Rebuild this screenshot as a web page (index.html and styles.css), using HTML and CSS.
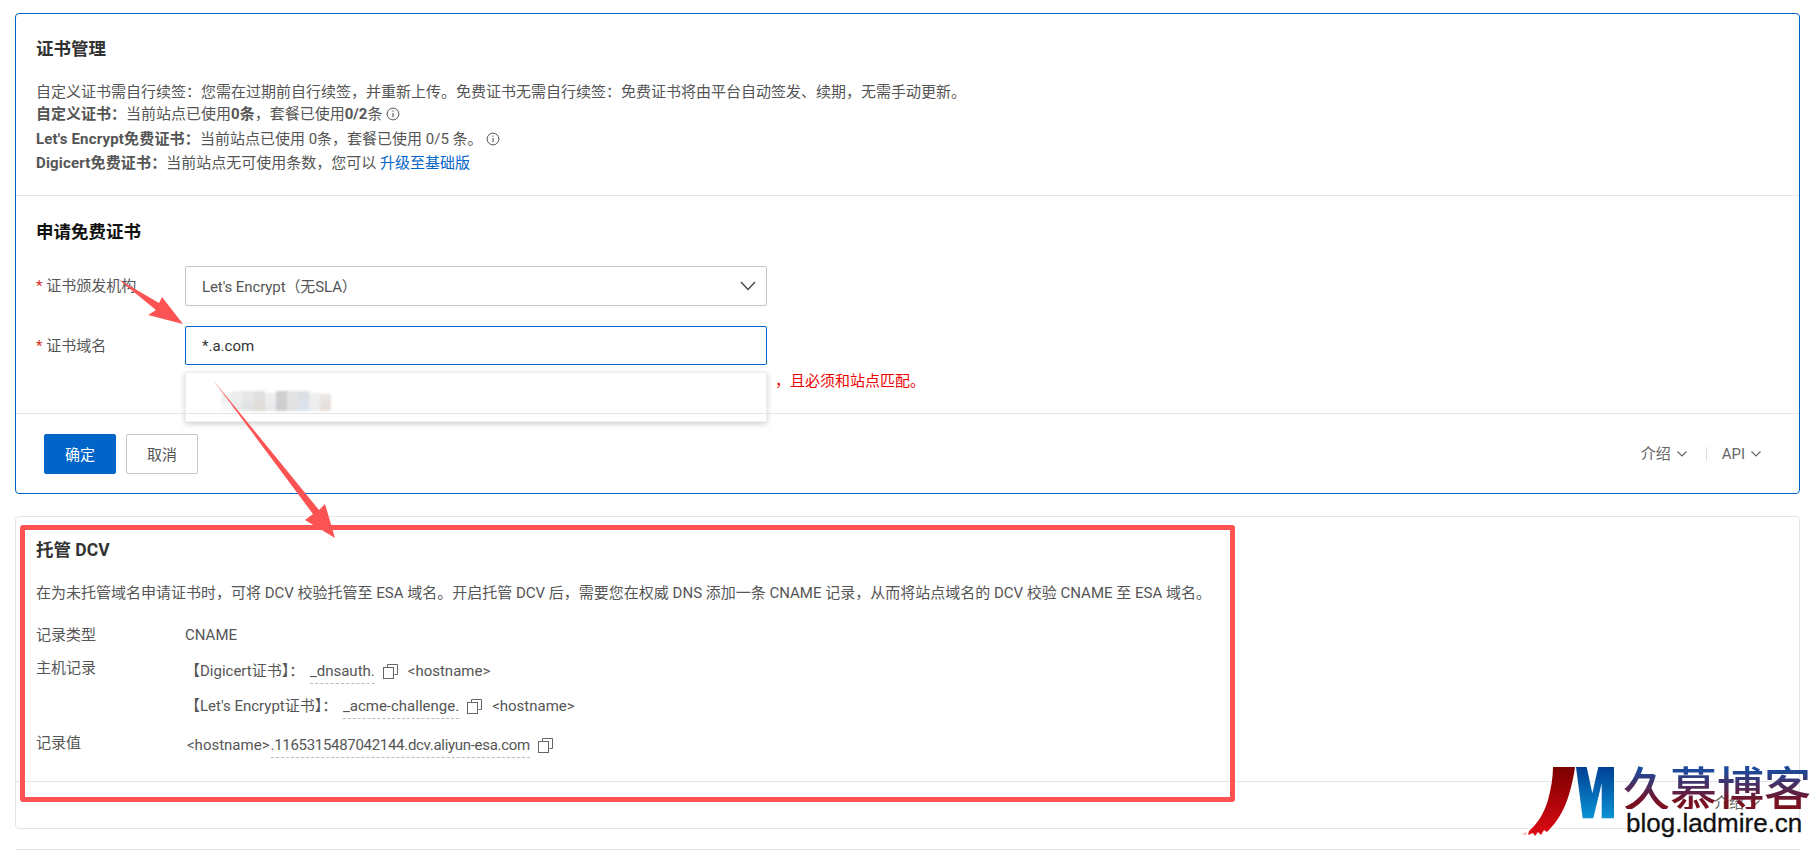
FILE: index.html
```html
<!DOCTYPE html>
<html lang="zh-CN">
<head>
<meta charset="utf-8">
<title>证书管理</title>
<link rel="stylesheet" href="styles.css">
</head>
<body>
<svg width="0" height="0" class="defs">
  <symbol id="copy" viewBox="0 0 15 15"><path d="M4.5 3.5V.5h10v10h-3" fill="none" stroke="#666" stroke-width="1"/><rect x=".5" y="3.5" width="10" height="11" fill="none" stroke="#666" stroke-width="1"/></symbol>
  <symbol id="info" viewBox="0 0 14 14"><circle cx="7" cy="7" r="5.9" fill="none" stroke="#555" stroke-width="1"/><path d="M7 6v4.2M7 3.6v1.2" stroke="#555" stroke-width="1.1"/></symbol>
  <symbol id="chev" viewBox="0 0 10 6"><path d="M.5.5 5 5 9.500.5" fill="none" stroke="#666" stroke-width="1.2"/></symbol>
</svg>
<main class="page">
  <section class="card card-active">
    <div class="section section-intro">
      <h2 class="title">证书管理</h2>
      <p class="line line-first">自定义证书需自行续签：您需在过期前自行续签，并重新上传。免费证书无需自行续签：免费证书将由平台自动签发、续期，无需手动更新。</p>
      <p class="line"><b>自定义证书：</b>当前站点已使用<b>0条</b>，套餐已使用<b>0/2</b>条 <svg class="ico-info"><use href="#info"/></svg></p>
      <p class="line line-third"><b class="wide">Let's Encrypt免费证书：</b>当前站点已使用 0条，套餐已使用 0/5 条。 <svg class="ico-info"><use href="#info"/></svg></p>
      <p class="line line-gap"><b class="wide">Digicert免费证书：</b>当前站点无可使用条数，您可以 <a class="link">升级至基础版</a></p>
    </div>
    <div class="section section-form">
      <h2 class="title title-dark">申请免费证书</h2>
      <div class="field">
        <label class="label"><span class="req">*</span> 证书颁发机构</label>
        <div class="select"><span class="select-text">Let's Encrypt（无SLA）</span><svg class="ico-select" viewBox="0 0 16 10"><path d="M1 1l7 7.500L15 1" fill="none" stroke="#444" stroke-width="1.300"/></svg></div>
      </div>
      <div class="field field-domain">
        <label class="label"><span class="req">*</span> 证书域名</label>
        <div class="input">*.a.com</div>
      </div>
      <p class="help">，且必须和站点匹配。</p>
      <div class="dropdown">
        <svg class="blur" width="120" height="36" viewBox="0 0 120 36">
          <g class="blur-g">
            <rect x="0" y="4" width="11" height="9" fill="#f0f0f0"/><rect x="11" y="2" width="11" height="11" fill="#ededed"/><rect x="22" y="2" width="11" height="11" fill="#e6e6e6"/><rect x="33" y="2" width="11" height="11" fill="#dfdfdf"/><rect x="44" y="4" width="11" height="9" fill="#ededed"/><rect x="55" y="2" width="11" height="11" fill="#cfcfd2"/><rect x="66" y="2" width="11" height="11" fill="#e3e3e3"/><rect x="77" y="2" width="11" height="11" fill="#dcdfe3"/><rect x="88" y="4" width="11" height="9" fill="#eeeeee"/><rect x="99" y="5" width="11" height="8" fill="#e8e5e3"/>
            <rect x="0" y="13" width="11" height="9" fill="#f8f8f8"/><rect x="11" y="13" width="11" height="9" fill="#eaeaea"/><rect x="22" y="13" width="11" height="9" fill="#e0e3e5"/><rect x="33" y="13" width="11" height="9" fill="#e0dcd8"/><rect x="44" y="13" width="11" height="9" fill="#e8eaec"/><rect x="55" y="13" width="11" height="9" fill="#cdcdd0"/><rect x="66" y="13" width="11" height="9" fill="#e3e1df"/><rect x="77" y="13" width="11" height="9" fill="#dbe3ec"/><rect x="88" y="13" width="11" height="9" fill="#eeeeee"/><rect x="99" y="13" width="11" height="9" fill="#e6e0dc"/>
          </g>
        </svg>
      </div>
    </div>
    <div class="footer">
      <div class="actions">
        <button class="btn btn-primary">确定</button>
        <button class="btn">取消</button>
      </div>
      <div class="doc-links">
        <span class="doc">介绍 <svg class="ico-chev"><use href="#chev"/></svg></span>
        <i class="sep"></i>
        <span class="doc">API <svg class="ico-chev"><use href="#chev"/></svg></span>
      </div>
    </div>
  </section>

  <section class="card card-plain">
    <div class="section-dcv">
      <h2 class="title title-dcv">托管 DCV</h2>
      <p class="desc">在为未托管域名申请证书时，可将 DCV 校验托管至 ESA 域名。开启托管 DCV 后，需要您在权威 DNS 添加一条 CNAME 记录，从而将站点域名的 DCV 校验 CNAME 至 ESA 域名。</p>
      <div class="kv kv-type"><span class="k">记录类型</span><span class="v">CNAME</span></div>
      <div class="kv kv-host">
        <span class="k">主机记录</span>
        <div class="v-col">
          <div class="v v-row">【Digicert证书】： <span class="dash dash-host">_dnsauth.</span><svg class="ico-copy"><use href="#copy"/></svg><span class="host">&lt;hostname&gt;</span></div>
          <div class="v v-row v-row-2">【Let's Encrypt证书】： <span class="dash dash-host">_acme-challenge.</span><svg class="ico-copy"><use href="#copy"/></svg><span class="host">&lt;hostname&gt;</span></div>
        </div>
      </div>
      <div class="kv kv-val">
        <span class="k">记录值</span>
        <div class="v v-row"><span class="host-lead">&lt;hostname&gt;</span><span class="dash dash-val">.1165315487042144.dcv.aliyun-esa.com</span><svg class="ico-copy"><use href="#copy"/></svg></div>
      </div>
    </div>
    <div class="footer-dcv"><span class="doc">介绍 <svg class="ico-chev"><use href="#chev"/></svg></span></div>
  </section>
  <div class="next-card"></div>
</main>

<div class="redbox"></div>
<svg class="arrows" width="1819" height="850" viewBox="0 0 1819 850">
  <polygon fill="#fb5353" points="118,279 159,303 162,297 183,324 148,315 156,310"/>
  <polygon fill="#fb5353" points="213,380 319,510 325,504 335,538 305,520 313,514"/>
</svg>
<div class="watermark">
  <svg class="wm-logo" width="96" height="72" viewBox="0 0 96 72">
    <defs>
      <linearGradient id="gj" x1="0" y1="0" x2="0" y2="1"><stop offset="0" stop-color="#7a0000"/><stop offset="1" stop-color="#e00a14"/></linearGradient>
      <linearGradient id="gm" x1="0" y1="0" x2="0" y2="1"><stop offset="0" stop-color="#003f94"/><stop offset="1" stop-color="#0a92d4"/></linearGradient>
    </defs>
    <path fill="url(#gj)" d="M33 0H55C53 14 49 31 43 43 38 53 32 60 27 65L24 63 21 68 18 65 15 69 13 66 8 68 9 64C17 57 24 47 28 33 31 22 33 10 33 0Z"/>
    <path fill="#f3b0b0" d="M2 67 7 65 6 68Z"/>
    <path fill="url(#gm)" d="M56 0H66.700L72.300 26.300 78.300 0H94V51.300H81.700V16.300L73.300 51.300H62.700Z"/>
  </svg>
  <div class="wm-text">
    <div class="wm-cn">久慕博客</div>
    <div class="wm-en">blog.ladmire.cn</div>
  </div>
</div>
</body>
</html>
```
FILE: styles.css
```css
* { box-sizing: border-box; }
html, body { margin: 0; height: 850px; overflow: hidden; background: #fff; }
body {
  position: relative;
  font-family: Roboto, "Noto Sans CJK SC", sans-serif;
  font-size: 15px;
  color: #555;
}
.defs { position: absolute; }
.page { padding: 13px 19px 0 15px; }
.card { background: #fff; border-radius: 4px; }
.card-active { border: 1px solid #0064c8; }
.card-plain { border: 1px solid #e5e5e5; margin-top: 22px; height: 313px; display: flex; flex-direction: column; }
.next-card { border-top: 1px solid #e5e5e5; margin-top: 20px; }

.section-intro { padding: 23px 21px 21px 20px; border-bottom: 1px solid #e5e5e5; height: 182px; }
.title { margin: 0; font-size: 17.5px; line-height: 24px; font-weight: 700; color: #333; }
.title-dark { color: #111; }
.line { margin: 0; line-height: 22px; white-space: nowrap; }
.line-first { margin-top: 20px; }
.line-third { margin-top: 3px; }
.line-gap { margin-top: 2px; }
.line b { font-weight: 700; }
.line .wide { letter-spacing: .17px; }
.link { color: #0064c8; }
.ico-info { width: 14px; height: 14px; vertical-align: -2px; }

.section-form { position: relative; padding: 24px 20px 21px; height: 217px; }
.field { display: flex; align-items: center; margin-top: 22px; }
.field-domain { margin-top: 20px; }
.label { width: 149px; line-height: 20px; color: #555; }
.req { color: #d93026; }
.select, .input {
  width: 582px; height: 40px; border-radius: 2px; padding-left: 16px;
  display: flex; align-items: center; background: #fff; color: #555;
}
.select { border: 1px solid #c4c6cc; position: relative; justify-content: space-between; padding-right: 10px; }
.select-text { padding-bottom: 2px; letter-spacing: -.1px; }
.ico-select { width: 16px; height: 10px; }
.input { border: 1px solid #0064c8; height: 39px; color: #333; }
.help { margin: 6px 0 0; padding-left: 739px; color: #e00; line-height: 20px; }
.dropdown {
  position: absolute; left: 169px; top: 176px; width: 582px; height: 50px;
  background: #fff; border: 1px solid #eee; box-shadow: 0 2px 6px rgba(0,0,0,.2); z-index: 2;
  padding: 16px 0 0 35px;
}
.blur { display: block; }
.blur-g { filter: blur(1px); }

.footer { display: flex; justify-content: space-between; align-items: center; border-top: 1px solid #e5e5e5; padding: 20px 38px 19px 28px; position: relative; z-index: 3; background: transparent; }
.actions { display: flex; gap: 10px; }
.btn {
  width: 72px; height: 40px; border: 1px solid #c4c6cc; background: #fff; border-radius: 2px;
  font: inherit; color: #555; padding: 0 0 2px;
}
.btn-primary { background: #0064c8; border-color: #0064c8; color: #fff; }
.doc-links { display: flex; align-items: center; gap: 15px; }
.doc { display: inline-flex; align-items: center; gap: 6px; color: #666; line-height: 20px; }
.ico-chev { width: 10px; height: 6px; }
.sep { width: 1px; height: 14px; background: #ddd; margin-left: 4px; }

.section-dcv { padding: 21px 20px 0; height: 265px; border-bottom: 1px solid #e5e5e5; }
.title-dcv { color: #333; }
.desc { margin: 20px 0 0; line-height: 22px; white-space: nowrap; }
.kv { display: flex; line-height: 20px; }
.kv-type { margin-top: 21px; }
.kv-host { margin-top: 13px; }
.kv-val { margin-top: 17px; }
.k { width: 149px; flex: none; }
.v-col { display: flex; flex-direction: column; margin-top: 3px; }
.v { display: flex; align-items: center; white-space: pre; }
.v-row-2 { margin-top: 15px; }
.kv-val .v-row { margin-top: 2px; padding-left: 2px; }
.dash { position: relative; }
.dash::after { content: ""; position: absolute; left: 0; right: 0; bottom: -3px; border-bottom: 1px dashed #bbb; }
.dash-host { margin-left: 2px; }
.dash-val { letter-spacing: -.3px; margin-left: 1px; }
.ico-copy { width: 15px; height: 15px; margin-left: 8px; }
.host { margin-left: 10px; }
.footer-dcv { display: flex; justify-content: flex-end; padding: 11px 39px 0 0; }

.redbox {
  position: absolute; left: 20px; top: 525px; width: 1215px; height: 277px;
  border: 5px solid #fb5353; border-radius: 3px; z-index: 4;
}
.arrows { position: absolute; left: 0; top: 0; z-index: 5; pointer-events: none; }
.watermark { position: absolute; left: 1520px; top: 763px; display: flex; gap: 7px; z-index: 6; }
.wm-logo { margin-top: 4px; }
.wm-cn {
  font-family: "Noto Sans CJK SC", sans-serif; font-size: 47px; line-height: 46px; font-weight: 500; white-space: nowrap;
  background: linear-gradient(#1c4a9c 15%, #7a1020 85%); -webkit-background-clip: text; background-clip: text; color: transparent;
}
.wm-en { font-family: "Liberation Sans", sans-serif; font-size: 26px; line-height: 28px; color: #111; margin-left: 3px; white-space: nowrap; -webkit-text-stroke: .3px #111; }
```
